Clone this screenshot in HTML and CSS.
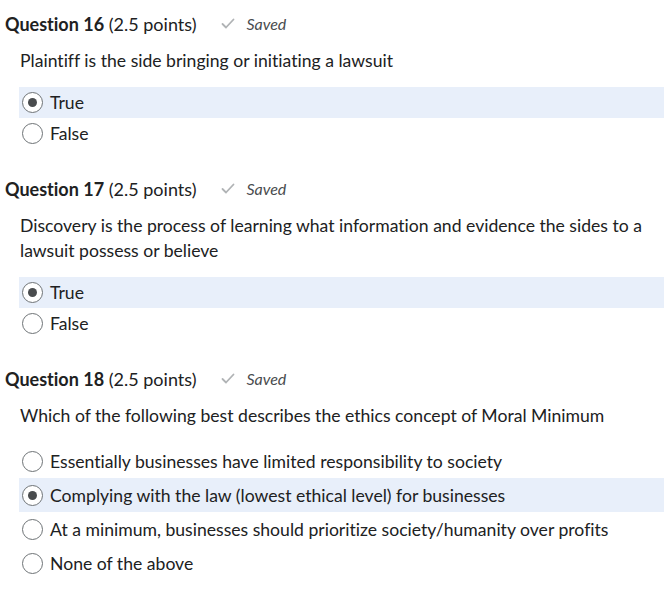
FILE: index.html
```html
<!DOCTYPE html>
<html lang="en">
<head>
    <meta charset="UTF-8">
    <title>Quiz</title>
    <link rel="stylesheet" href="styles.css">
</head>
<body>
    <div class="quiz">
        <div class="question">
            <div class="q-head">
                <span class="q-title"><b>Question 16</b> (2.5 points)</span>
                <span class="saved">
                    <svg class="check" width="14" height="11" viewBox="0 0 14 11"><path d="M1.5 6 L5 9.5 L12.5 1.5" fill="none" stroke="#b0b3b5" stroke-width="1.8" stroke-linecap="round" stroke-linejoin="round"/></svg>
                    <i>Saved</i>
                </span>
            </div>
            <p class="q-text">Plaintiff is the side bringing or initiating a lawsuit</p>
            <ul class="options">
                <li class="option selected"><span class="radio"></span>True</li>
                <li class="option"><span class="radio"></span>False</li>
            </ul>
        </div>

        <div class="question">
            <div class="q-head">
                <span class="q-title"><b>Question 17</b> (2.5 points)</span>
                <span class="saved">
                    <svg class="check" width="14" height="11" viewBox="0 0 14 11"><path d="M1.5 6 L5 9.5 L12.5 1.5" fill="none" stroke="#b0b3b5" stroke-width="1.8" stroke-linecap="round" stroke-linejoin="round"/></svg>
                    <i>Saved</i>
                </span>
            </div>
            <p class="q-text">Discovery is the process of learning what information and evidence the sides to a lawsuit possess or believe</p>
            <ul class="options">
                <li class="option selected"><span class="radio"></span>True</li>
                <li class="option"><span class="radio"></span>False</li>
            </ul>
        </div>

        <div class="question">
            <div class="q-head">
                <span class="q-title"><b>Question 18</b> (2.5 points)</span>
                <span class="saved">
                    <svg class="check" width="14" height="11" viewBox="0 0 14 11"><path d="M1.5 6 L5 9.5 L12.5 1.5" fill="none" stroke="#b0b3b5" stroke-width="1.8" stroke-linecap="round" stroke-linejoin="round"/></svg>
                    <i>Saved</i>
                </span>
            </div>
            <p class="q-text">Which of the following best describes the ethics concept of Moral Minimum</p>
            <ul class="options tall">
                <li class="option"><span class="radio"></span>Essentially businesses have limited responsibility to society</li>
                <li class="option selected"><span class="radio"></span>Complying with the law (lowest ethical level) for businesses</li>
                <li class="option"><span class="radio"></span>At a minimum, businesses should prioritize society/humanity over profits</li>
                <li class="option"><span class="radio"></span>None of the above</li>
            </ul>
        </div>
    </div>
</body>
</html>
```

FILE: styles.css
```css
body {
    margin: 0;
    font-family: Lato, "Open Sans", sans-serif;
    font-variant-ligatures: none;
    color: #202122;
    background: #fff;
}

.quiz {
    padding-top: 11px;
}

.question {
    margin-bottom: 27px;
}

.q-head {
    display: flex;
    align-items: center;
    height: 25px;
    padding-left: 5px;
    font-size: 18px;
}

.q-head b {
    font-weight: 700;
}

.saved {
    display: flex;
    align-items: center;
    margin-left: 25px;
    color: #494c4e;
    font-size: 16px;
}

.check {
    margin-right: 11px;
}

.q-text {
    margin: 12px 20px 0 20px;
    font-size: 17.6px;
    line-height: 25px;
}

.options {
    list-style: none;
    margin: 14px 0 0 19px;
    padding: 0;
}

.option {
    display: flex;
    align-items: center;
    height: 31px;
    padding-left: 3px;
    font-size: 17.6px;
}

.options.tall {
    margin-top: 16px;
}

.options.tall .option {
    height: 34px;
}

.option.selected {
    background: #e8effa;
}

.radio {
    width: 19px;
    height: 19px;
    border: 1.5px solid #6e7376;
    border-radius: 50%;
    background: #fff;
    margin-right: 7px;
    display: flex;
    align-items: center;
    justify-content: center;
    flex-shrink: 0;
}

.selected .radio::after {
    content: "";
    width: 9px;
    height: 9px;
    border-radius: 50%;
    background: #494c4e;
}
```
